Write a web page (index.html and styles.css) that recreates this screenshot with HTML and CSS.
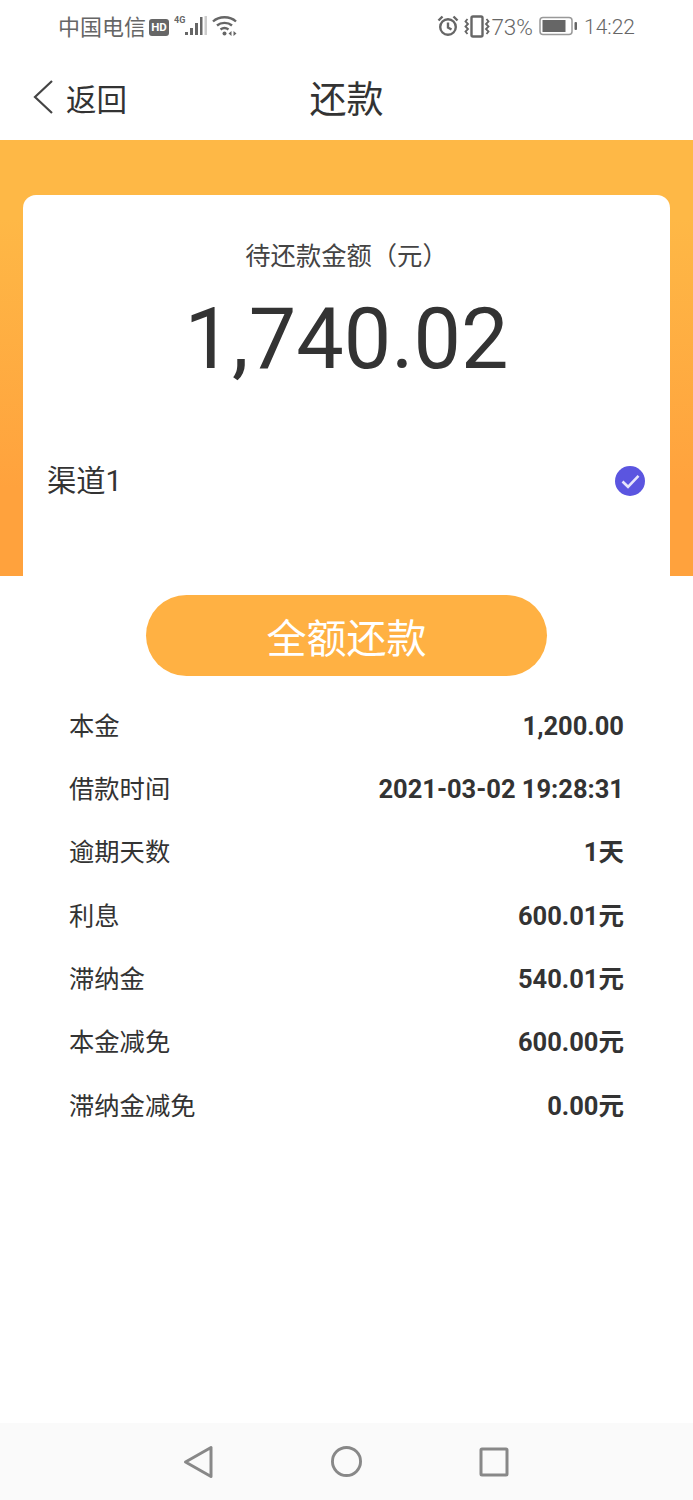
FILE: index.html
```html
<!DOCTYPE html>
<html lang="zh-CN">
<head>
<meta charset="utf-8">
<title>还款</title>
<link rel="stylesheet" href="styles.css">
</head>
<body>
<div class="page">
  <div class="status">
    <div class="status-left">
      <span class="carrier">中国电信</span>
      <span class="hd">HD</span>
      <svg class="sig" width="34" height="24" viewBox="0 0 34 24"><text x="0" y="9" class="four-g">4G</text><g fill="#666"><rect x="11" y="18" width="3" height="3"/><rect x="16" y="14" width="3" height="7"/><rect x="21" y="9" width="3" height="12"/><rect x="26" y="3" width="2.500" height="18"/></g><rect x="30.500" y="2" width="2.500" height="19" fill="#ccc"/></svg>
      <svg class="wifi" width="25" height="22" viewBox="0 0 25 22" fill="none" stroke="#666" stroke-width="2.400"><path d="M1 6.500C7 .8 18 .8 24 6.500"/><path d="M5 10.500C9 7 16 7 20 10.500"/><path d="M8.500 14.500C10.800 12.800 14.200 12.800 16.500 14.500"/><g fill="#666" stroke="none"><circle cx="12.500" cy="18.500" r="2"/><path d="M16.500 18.500l3-2.500v5zM24.500 18.500l-3-2.500v5z"/></g></svg>
    </div>
    <div class="status-right">
      <svg width="22" height="22" viewBox="0 0 22 22" fill="none" stroke="#666" stroke-width="2.400"><circle cx="11" cy="12" r="7.800"/><path d="M11 7.500v5l3.500 2"/><path d="M1.500 5.500L5.500 1.500M20.500 5.500L16.500 1.500"/></svg>
      <svg class="vib" width="26" height="23" viewBox="0 0 26 23" fill="none" stroke="#666" stroke-width="1.800"><rect x="7.500" y="1.500" width="11" height="20" rx="1.500" stroke-width="2.400"/><path d="M3.500 4L1.500 6.500 4 9 1.500 11.500 4 14 1.500 16.500 3.500 19M22.500 4L24.500 6.500 22 9 24.500 11.500 22 14 24.500 16.500 22.500 19"/></svg>
      <span class="pct">73%</span>
      <svg class="batt" width="39" height="20" viewBox="0 0 39 20"><rect x="1" y="1.500" width="32" height="17" rx="3" fill="none" stroke="#999" stroke-width="1.500"/><rect x="3.500" y="4" width="23" height="12" fill="#666"/><rect x="35.500" y="6" width="2.500" height="8" rx="1" fill="#666"/></svg>
      <span class="time">14:22</span>
    </div>
  </div>

  <header class="nav">
    <div class="back">
      <svg class="chevron" width="22" height="36" viewBox="0 0 22 36" fill="none" stroke="#444" stroke-width="2.200"><path d="M20 2L3 18 20 34"/></svg>
      <span>返回</span>
    </div>
    <h1>还款</h1>
  </header>

  <section class="hero">
    <div class="card">
      <div class="due-label">待还款金额（元）</div>
      <div class="due-amount">1,740.02</div>
      <div class="channel">
        <span>渠道1</span>
        <svg width="30" height="30" viewBox="0 0 30 30"><circle cx="15" cy="15" r="15" fill="#5b55e0"/><path d="M7.500 15.500L13 20.800 23.500 9.800" fill="none" stroke="#e6e4fb" stroke-width="2.600"/></svg>
      </div>
    </div>
  </section>

  <div class="action"><button class="pay">全额还款</button></div>

  <dl class="rows">
    <div class="row"><dt>本金</dt><dd>1,200.00</dd></div>
    <div class="row"><dt>借款时间</dt><dd>2021-03-02 19:28:31</dd></div>
    <div class="row"><dt>逾期天数</dt><dd>1天</dd></div>
    <div class="row"><dt>利息</dt><dd>600.01元</dd></div>
    <div class="row"><dt>滞纳金</dt><dd>540.01元</dd></div>
    <div class="row"><dt>本金减免</dt><dd>600.00元</dd></div>
    <div class="row"><dt>滞纳金减免</dt><dd>0.00元</dd></div>
  </dl>

  <footer class="softkeys">
    <svg width="30" height="34" viewBox="0 0 30 34" fill="none" stroke="#888" stroke-width="3" stroke-linejoin="round"><path d="M28 2.500V31.500L2.500 17Z"/></svg>
    <svg class="home" width="31" height="31" viewBox="0 0 32 32" fill="none" stroke="#888" stroke-width="3"><circle cx="16" cy="16" r="14.500"/></svg>
    <svg width="30" height="30" viewBox="0 0 30 30" fill="none" stroke="#888" stroke-width="3" stroke-linejoin="round"><rect x="2" y="2" width="26" height="26" rx="1"/></svg>
  </footer>
</div>
</body>
</html>
```

FILE: styles.css
```css
* { box-sizing: border-box; }
html, body { margin: 0; padding: 0; }
body {
  background: #fff;
  color: #333;
  font-family: Roboto, "Noto Sans CJK SC", sans-serif;
}
.page {
  width: 693px;
  height: 1500px;
  display: flex;
  flex-direction: column;
  overflow: hidden;
}
.status {
  height: 52px;
  flex: none;
  display: flex;
  justify-content: space-between;
  align-items: center;
  padding: 0 58px 0 58px;
  color: #666;
}
.status-left, .status-right { display: flex; align-items: center; }
.carrier { font-size: 22px; line-height: 26px; margin-top: 3px; }
.hd {
  margin-left: 3px;
  margin-top: 2px;
  width: 20px;
  height: 17px;
  border-radius: 3px;
  background: #666;
  color: #fff;
  font-size: 11.500px;
  font-weight: 700;
  line-height: 17px;
  text-align: center;
}
.sig { margin-left: 5px; }
.four-g { font: 700 9px "Roboto", sans-serif; fill: #666; }
.wifi { margin-left: 4px; }
.vib { margin-left: 5px; }
.pct { font-size: 22.500px; font-weight: 300; margin-left: 1.500px; margin-top: 2px; line-height: 26px; }
.batt { margin-left: 6px; }
.time { font-size: 21px; font-weight: 300; margin-left: 6px; margin-top: 2px; line-height: 26px; }
.nav {
  height: 88px;
  flex: none;
  display: grid;
  grid-template-columns: 1fr auto 1fr;
  align-items: center;
  padding: 10px 32px 0;
}
.back {
  display: flex;
  align-items: center;
  gap: 12px;
  font-size: 30.500px;
  line-height: 44px;
  color: #333;
}
.chevron { margin-bottom: 8px; }
.nav h1 {
  margin: 0;
  font-size: 37px;
  line-height: 44px;
  font-weight: 400;
  color: #333;
}
.hero {
  height: 436px;
  flex: none;
  padding: 55px 23px 0;
  background: linear-gradient(180deg, #feb846 0%, #feb846 18%, #ffa23d 80%, #ffa23d 100%);
}
.card {
  height: 381px;
  background: #fff;
  border-radius: 13px 13px 0 0;
  padding-top: 44px;
}
.due-label {
  text-align: center;
  font-size: 25.300px;
  line-height: 36px;
  color: #444;
}
.due-amount {
  text-align: center;
  font-size: 84.500px;
  line-height: 104px;
  color: #333;
  margin-top: 13px;
}
.channel {
  display: flex;
  justify-content: space-between;
  align-items: center;
  padding: 0 25px 0 24px;
  margin-top: 69px;
  font-size: 29.300px;
  line-height: 40px;
  color: #333;
}
.action {
  flex: none;
  display: flex;
  justify-content: center;
  padding-top: 19px;
}
.pay {
  width: 401px;
  height: 81px;
  padding: 8px 0 0;
  border: 0;
  border-radius: 41px;
  background: #ffb143;
  color: #fff;
  font-family: inherit;
  font-size: 40px;
  line-height: 48px;
}
.rows {
  margin: 19px 0 0;
  padding: 0 69px 0 69px;
  flex: 1;
}
.row {
  height: 63.330px;
  display: flex;
  justify-content: space-between;
  align-items: center;
  font-size: 25.300px;
  line-height: 30px;
}
.row dt { color: #333; }
.row dd { margin: 0 0 2px; font-weight: 700; font-size: 25.500px; color: #333; }
.softkeys {
  height: 77px;
  flex: none;
  background: #fafafa;
  display: flex;
  align-items: center;
  padding-left: 183px;
  gap: 117px;
}
.home { margin-left: 1px; }
```
